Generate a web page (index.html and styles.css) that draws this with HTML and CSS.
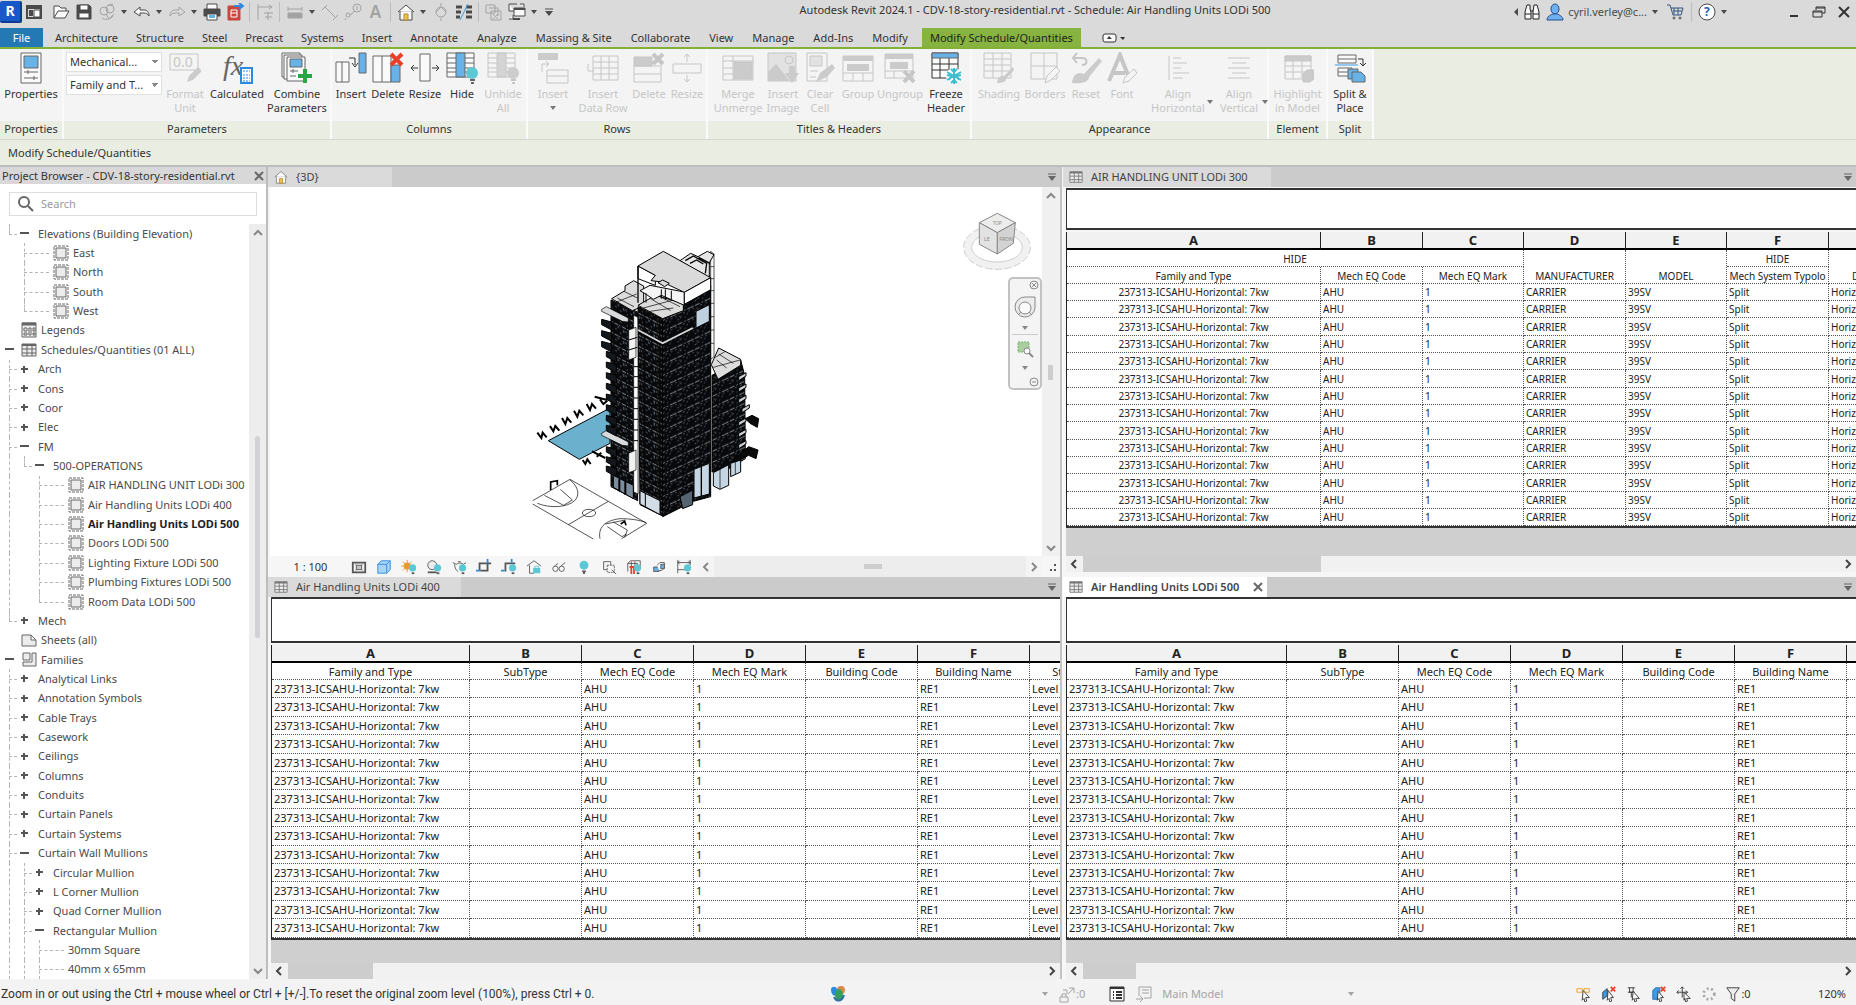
FILE: index.html
```html
<!DOCTYPE html>
<html lang="en">
<head>
	<meta charset="utf-8">
	<title>Autodesk Revit 2024.1</title>
	<link rel="stylesheet" href="styles.css">
</head>
<body>
	<!-- icons -->
	<svg class="sprite">
		<!-- quick access -->
		<symbol id="q-home-page" viewBox="0 0 18 18"><path d="M2 3h14v12H2zM2 5h14M4 8h4M4 10h4M4 12h4" stroke-width="2"/><path class="fw" d="M9 7h6v7H9z"/></symbol>
		<symbol id="q-open" viewBox="0 0 18 18"><path class="fw" d="M2 15V3h5l2 2h5v3"/><path class="fw" d="M2 15l4-7h11l-4 7z"/></symbol>
		<symbol id="q-save" viewBox="0 0 18 18"><path d="M2 2h12l2 2v12H2z" fill="currentColor"/><path class="fw" d="M5 2h8v5H5zM4 10h10v5H4z"/></symbol>
		<symbol id="q-sync" viewBox="0 0 18 18"><circle cx="6" cy="8" r="4"/><circle cx="12" cy="6" r="4"/><path d="M4 15c3 2 8 2 11-2M8 11l3 5 5-5M10 2l5-1"/></symbol>
		<symbol id="q-undo" viewBox="0 0 18 18"><path class="fw" d="M1 9l6-5v3h4c3 0 5 2 5 6-1-2-3-3-5-3H7v3z"/></symbol>
		<symbol id="q-redo" viewBox="0 0 18 18"><path d="M17 9l-6-5v3H7c-3 0-5 2-5 6 1-2 3-3 5-3h4v3z"/></symbol>
		<symbol id="q-print" viewBox="0 0 18 18"><path class="fw" d="M4 1h10v6H4z"/><path d="M1 6h16v7H1z" fill="currentColor"/><path class="fw" d="M4 11h10v6H4z"/><path class="fb" d="M6 12h6v3H6z" stroke="none"/></symbol>
		<symbol id="q-pdf" viewBox="0 0 18 18"><path d="M2 3h12v14H2z" fill="#c8473f" stroke="#c8473f"/><path d="M5 7h6v7H5zM5 10h6" stroke="#fff"/><path d="M8 3h8M13 0l4 3-4 3" stroke="#2b8ae0" stroke-width="2"/></symbol>
		<symbol id="q-align" viewBox="0 0 18 18"><path d="M2 1v16M2 4h13M13 2l3 2-3 2M12 9v8M8 10h9M9 14h7"/></symbol>
		<symbol id="q-measure" viewBox="0 0 18 18"><path d="M2 10h14v5H2z" fill="currentColor"/><path d="M2 6h14M2 4v4M16 4v4"/></symbol>
		<symbol id="q-line" viewBox="0 0 18 18"><path d="M4 4l10 10M1 7l5-5M12 17l5-5"/></symbol>
		<symbol id="q-tag" viewBox="0 0 18 18"><circle cx="13" cy="5" r="4"/><circle cx="4" cy="12" r="2"/><path d="M6 12l5-4M13 3v4M2 15l-1 2"/></symbol>
		<symbol id="q-house" viewBox="0 0 18 18"><path class="fw" d="M1 9l8-7 8 7M3 8v9h12V8"/><path class="door" d="M7 11h4v6H7z"/></symbol>
		<symbol id="q-section" viewBox="0 0 18 18"><circle cx="9" cy="9" r="5"/><path d="M9 0v3M9 15v3M4 9l5-5 5 5"/></symbol>
		<symbol id="q-thin" viewBox="0 0 18 18"><path d="M1 4h6M1 9h5M1 14h4M11 4h6M11 9h6M11 14h6" stroke-width="3"/><path d="M5 17l8-16" stroke="#3a9be8"/></symbol>
		<symbol id="q-hidden" viewBox="0 0 18 18"><path d="M1 2h9v8H1zM4 5h9v8M6 8h10v9H6zM8 11l5 5M13 11l-5 5"/></symbol>
		<symbol id="q-switch" viewBox="0 0 18 18"><path class="fw" d="M6 5h11v8H6zM1 1h8M1 1v7h5M12 1h4v3M5 12v4H1"/><path d="M6 6h11M5 16h7" stroke-width="2"/></symbol>

		<!-- ribbon, 32px -->
		<symbol id="r-props" viewBox="0 0 32 32"><path class="fw" d="M6 1h20v30H6z"/><path class="fb" d="M9 4h14v12H9z"/><path d="M9 20h14M9 26h14M13 18v4M19 24v4"/></symbol>
		<symbol id="r-format" viewBox="0 0 32 32"><path d="M1 2h28v16H1z"/><text x="4" y="15" font-size="14">0.0</text><path class="fg" d="M18 30l2-6 9-9 4 4-9 9z" stroke="none"/></symbol>
		<symbol id="r-calc" viewBox="0 0 32 32"><text class="fx" x="2" y="23">fx</text><path d="M20 16h11v15H20z" fill="#fff" stroke="#2b8ae0" stroke-width="2"/><path d="M22 19h7M22 23h7M22 26h7M22 29h7" stroke="#2b8ae0" stroke-dasharray="2 1"/></symbol>
		<symbol id="r-combine" viewBox="0 0 32 32"><path class="fw" d="M1 1h18v24H1z"/><path class="fw" d="M3 3h18v24H3z"/><path class="fw" d="M6 5h18v24H6z"/><path class="fb" d="M9 7h12v8H9z"/><path d="M9 19h8M9 24h6M12 17v4"/><path d="M24 17v14M17 24h14" stroke="#27a844" stroke-width="4"/></symbol>
		<symbol id="r-colins" viewBox="0 0 32 32"><path class="fw" d="M1 10h13v20H1zM7 10v20"/><path class="fb" d="M24 1h7v20h-7z"/><path d="M14 6h6v7M17 11l3 4 3-4" stroke="#333"/></symbol>
		<symbol id="r-coldel" viewBox="0 0 32 32"><path class="fw" d="M1 4h18v26H1zM10 4v26"/><path class="fb" d="M19 13h9v17h-9z"/><path d="M19 2l11 11M30 2L19 13" stroke="#e8412b" stroke-width="4"/></symbol>
		<symbol id="r-colres" viewBox="0 0 32 32"><path class="fw" d="M11 2h10v27H11z"/><path d="M9 16H2M5 13l-3 3 3 3M23 16h7M27 13l3 3-3 3" stroke="#333"/></symbol>
		<symbol id="r-hide" viewBox="0 0 32 32"><path class="fw" d="M1 1h27v24H1zM1 6h27M1 11h27M1 16h27M1 20h27"/><path class="fb" d="M10 1h9v24h-9z"/><circle class="fc" cx="26" cy="21" r="6" stroke="none"/><path d="M24 28h5M25 31h3" stroke-width="2"/></symbol>
		<symbol id="r-rowins" viewBox="0 0 32 32"><path class="fg" d="M1 1h20v7H1z" stroke="none"/><path d="M10 18h21v13H10zM10 24h21M5 20v-8h6M9 9l3 3-3 3"/></symbol>
		<symbol id="r-rowdata" viewBox="0 0 32 32"><path d="M6 4h25v24H6zM6 10h25M6 16h25M6 22h25M14 4v24M22 4v24M1 12v7h6"/></symbol>
		<symbol id="r-rowdel" viewBox="0 0 32 32"><path class="fg" d="M1 5h18v9H1z"/><path d="M1 14h27v16H1zM1 22h27"/><path d="M20 2l10 10M30 2L20 12" stroke-width="4"/></symbol>
		<symbol id="r-rowres" viewBox="0 0 32 32"><path d="M2 12h28v9H2zM16 10V2M13 5l3-3 3 3M16 23v7M13 27l3 3 3-3"/></symbol>
		<symbol id="r-merge" viewBox="0 0 32 32"><path d="M1 4h30v24H1zM1 9h30M1 16h10M1 22h10M11 4v24"/><path class="fg" d="M12 10h18v17H12z"/></symbol>
		<symbol id="r-image" viewBox="0 0 32 32"><path class="fl" d="M1 1h28v28H1z"/><path class="fg" d="M1 29V20l8-8 14 17zM22 14h6v7h4l-7 10-7-10h4z" stroke="none"/><circle cx="22" cy="8" r="4"/></symbol>
		<symbol id="r-clear" viewBox="0 0 32 32"><path d="M3 1h20v28H3z"/><path class="fl" d="M6 4h12v10H6z"/><path d="M6 19h8M6 25h6"/><path class="fg" d="M12 30l4-9 12-9 3 4-8 9z" stroke="none"/></symbol>
		<symbol id="r-group" viewBox="0 0 32 32"><path d="M1 4h30v25H1zM1 21h30M11 21v8M21 21v8"/><path class="fg" d="M1 4h30v5H1zM5 12h22v7H5z" stroke="none"/></symbol>
		<symbol id="r-ungroup" viewBox="0 0 32 32"><path d="M1 2h28v24H1zM1 19h28M10 19v7"/><path class="fg" d="M1 2h28v5H1zM6 10h18v7H6z" stroke="none"/><path d="M20 19l10 11M30 19L20 30" stroke-width="4"/></symbol>
		<symbol id="r-freeze" viewBox="0 0 32 32"><path class="fw" d="M2 1h26v25H2zM2 12h26M2 18h26M10 6v20M19 6v20" stroke="#333"/><path class="fb" d="M2 1h26v5H2z"/><circle cx="24" cy="24" r="8" fill="#fff" stroke="none"/><path d="M24 16v16M17 20l14 8M17 28l14-8M21 17l3 3 3-3M21 31l3-3 3 3M17 23l4 1-2 4M31 23l-4 1 2 4" stroke="#3dbdd0" stroke-width="2"/></symbol>
		<symbol id="r-shade" viewBox="0 0 32 32"><path d="M1 1h27v25H1zM1 7h27M1 13h27M1 19h27M10 1v25M19 1v25"/><path class="fg" d="M14 31c1-6 4-8 7-7l9-9 1 3-8 9c0 3-4 4-9 4z" stroke="none"/></symbol>
		<symbol id="r-border" viewBox="0 0 32 32"><path d="M2 1h26v26H2zM15 1v26M2 14h26"/><path class="fw" d="M16 31l2-7 9-9 4 4-9 9z"/></symbol>
		<symbol id="r-reset" viewBox="0 0 32 32"><path d="M3 6h9c6 0 6 7 0 7M7 1L3 6l4 5" stroke-width="2"/><path class="fg" d="M2 31c1-9 6-12 12-9L29 6l3 3-13 16c0 5-7 7-17 6z" stroke="none"/></symbol>
		<symbol id="r-font" viewBox="0 0 32 32"><path d="M3 29L14 3l8 20M7 21h12" stroke-width="4"/><path class="fw" d="M17 31l2-6 9-8 3 4-8 8z"/></symbol>
		<symbol id="r-alignh" viewBox="0 0 32 32"><path d="M7 4v24M11 6h8M11 11h14M11 16h8M11 21h16M11 26h10"/></symbol>
		<symbol id="r-alignv" viewBox="0 0 32 32"><path d="M5 6h22M9 11h14M5 16h22M9 21h14M5 26h22"/></symbol>
		<symbol id="r-high" viewBox="0 0 32 32"><path d="M3 4h26v23H3zM3 14h26M3 20h26M11 9v18M20 9v18"/><path class="fg" d="M3 4h26v5H3zM21 22l4-4h7v9l-4 3h-7z"/></symbol>
		<symbol id="r-split" viewBox="0 0 32 32"><path class="fw" d="M4 3h18v8H4zM4 7h18M4 16h14v8H4zM4 20h10"/><path d="M1 13h23" stroke="#3a9be8"/><path d="M24 7h5v6M26 11l3 3 3-3" stroke="#333"/><path class="fb" d="M14 17h10v10H14z"/><path class="fb" d="M18 20h9l4 4v6H18z"/></symbol>

		<!-- tree and panes -->
		<symbol id="t-view" viewBox="0 0 16 16"><path d="M1 1h14v14H1z" stroke-dasharray="3 1"/><path class="fl" d="M3 3h10v10H3z"/></symbol>
		<symbol id="t-legend" viewBox="0 0 16 16"><path class="fl" d="M1 1h14v14H1z"/><path d="M1 2h14" stroke-width="3"/><path d="M3 6h3v3H3zM3 11h3v2H3zM8 6h2v7H8zM12 6h2v3h-2zM12 11h2v2h-2z"/></symbol>
		<symbol id="t-sched" viewBox="0 0 16 16"><path class="fl" d="M1 2h14v12H1z"/><path d="M1 3h14" stroke-width="2"/><path d="M1 7h14M1 11h14M6 2v12M11 2v12"/></symbol>
		<symbol id="t-sheet" viewBox="0 0 16 16"><path class="fl" d="M1 3h9l5 5v6H1zM10 3v5h5"/></symbol>
		<symbol id="t-family" viewBox="0 0 16 16"><path class="fl" d="M2 1h7v7H2zM11 1h4v13H2v-4h9z"/></symbol>
		<symbol id="plus" viewBox="0 0 9 9"><path d="M4 1v7M1 4h7" stroke-width="2"/></symbol>
		<symbol id="minus" viewBox="0 0 9 9"><path d="M0 4h9" stroke-width="2"/></symbol>
		<symbol id="up" viewBox="0 0 10 10"><path d="M1 7l4-4 4 4" stroke-width="2"/></symbol>
		<symbol id="down" viewBox="0 0 10 10"><path d="M1 3l4 4 4-4" stroke-width="2"/></symbol>
		<symbol id="left" viewBox="0 0 10 10"><path d="M7 1L3 5l4 4" stroke-width="2"/></symbol>
		<symbol id="right" viewBox="0 0 10 10"><path d="M3 1l4 4-4 4" stroke-width="2"/></symbol>
		<symbol id="x" viewBox="0 0 10 10"><path d="M1 1l8 8M9 1L1 9" stroke-width="2"/></symbol>
		<symbol id="caret" viewBox="0 0 8 8"><path d="M1 2h6L4 6z" fill="currentColor" stroke="none"/></symbol>
		<symbol id="menu" viewBox="0 0 10 10"><path d="M1 2h8"/><path d="M1 4h8L5 9z" fill="currentColor" stroke="none"/></symbol>

		<!-- view control bar -->
		<symbol id="v-size" viewBox="0 0 18 18"><path d="M2 4h14v11H2z" stroke-width="2"/><path d="M5 6l8 7M13 6l-8 7"/><path class="fg" d="M6 7h6v5H6z"/></symbol>
		<symbol id="v-cube" viewBox="0 0 18 18"><path d="M2 6l4-4h10v10l-4 4H2zM2 6h10v10M12 6l4-4" fill="#a9d4f7" stroke="#2b8ae0"/></symbol>
		<symbol id="v-sun" viewBox="0 0 18 18"><circle cx="7" cy="8" r="4" fill="#eb9a2c" stroke="none"/><path d="M7 1v14M0 8h14M2 3l10 10M12 3L2 13" stroke="#eb9a2c"/><use href="#v-bulb"/></symbol>
		<symbol id="v-shadow" viewBox="0 0 18 18"><circle class="fl" cx="7" cy="7" r="5"/><path d="M2 15h10" stroke-width="2"/><use href="#v-bulb"/></symbol>
		<symbol id="v-render" viewBox="0 0 18 18"><path d="M2 4l4 2c2-2 6-2 8 0l3-2M4 6c0 4 2 7 4 8M8 3h3"/><use href="#v-bulb"/></symbol>
		<symbol id="v-crop" viewBox="0 0 18 18"><path d="M4 13V5h13M5 13h8V4" stroke-width="2"/><path d="M0 13h5M13 0v5" stroke="#2b8ae0" stroke-width="2"/></symbol>
		<symbol id="v-cropb" viewBox="0 0 18 18"><path d="M5 14V5h11" stroke-width="2"/><path d="M0 13h4M12 0v4" stroke="#2b8ae0" stroke-width="2"/><use href="#v-bulb"/></symbol>
		<symbol id="v-lock" viewBox="0 0 18 18"><path class="fw" d="M1 8l8-6 8 6M4 7v9h5"/><path class="fc" d="M8 10h8v6H8z" stroke="none"/><path d="M10 10V8h4v2" stroke="#5cc8d6"/></symbol>
		<symbol id="v-glass" viewBox="0 0 18 18"><circle cx="5" cy="11" r="3"/><circle cx="12" cy="11" r="3"/><path d="M4 8l4-3M11 8l5-4"/></symbol>
		<symbol id="v-bulb" viewBox="0 0 18 18"><circle class="fc" cx="13" cy="10" r="4" stroke="none"/><path d="M12 16h3" stroke-width="2"/></symbol>
		<symbol id="v-reveal" viewBox="0 0 18 18"><circle class="fc" cx="9" cy="7" r="5" stroke="none"/><path d="M7 14h4M8 16h2" stroke-width="2"/></symbol>
		<symbol id="v-temp" viewBox="0 0 18 18"><path d="M3 3h8v4M3 3v9h4"/><path d="M7 7h8v8H7z" stroke-dasharray="2 1"/><path d="M12 12l5 5"/></symbol>
		<symbol id="v-anal" viewBox="0 0 18 18"><path d="M2 5l3-3h11v9M2 5v9M2 5h11v9M6 3v9M10 3v9"/><path d="M6 9v8M9 9v8M4 9h8" stroke="#e8412b" stroke-width="2"/><use href="#v-bulb"/></symbol>
		<symbol id="v-disp" viewBox="0 0 18 18"><path class="fb" d="M3 9h6v5H3z"/><path class="fw" d="M7 7l3-3h5v6l-3 3H9"/><path class="fb" d="M11 6h4v5h-4z"/></symbol>
		<symbol id="v-con" viewBox="0 0 18 18"><path d="M2 1v15M16 1v6M2 4h14M2 12h10M4 2L2 4l2 2M14 2l2 2-2 2"/><use href="#v-bulb"/></symbol>
	</svg>

	<header class="titlebar">
		<div class="quick">
			<button class="logo">R</button>
			<button class="q gap-r"><svg><use href="#q-home-page"/></svg></button>
			<button class="q"><svg><use href="#q-open"/></svg></button>
			<button class="q"><svg><use href="#q-save"/></svg></button>
			<button class="q off"><svg><use href="#q-sync"/></svg></button>
			<button class="c"><svg><use href="#caret"/></svg></button>
			<button class="q"><svg><use href="#q-undo"/></svg></button>
			<button class="c"><svg><use href="#caret"/></svg></button>
			<button class="q off"><svg><use href="#q-redo"/></svg></button>
			<button class="c"><svg><use href="#caret"/></svg></button>
			<button class="q"><svg><use href="#q-print"/></svg></button>
			<button class="q"><svg><use href="#q-pdf"/></svg></button>
			<i class="sep"></i>
			<button class="q off"><svg><use href="#q-align"/></svg></button>
			<i class="sep"></i>
			<button class="q off"><svg><use href="#q-measure"/></svg></button>
			<button class="c"><svg><use href="#caret"/></svg></button>
			<button class="q off"><svg><use href="#q-line"/></svg></button>
			<button class="q off"><svg><use href="#q-tag"/></svg></button>
			<button class="q off big-a">A</button>
			<i class="sep"></i>
			<button class="q"><svg><use href="#q-house"/></svg></button>
			<button class="c"><svg><use href="#caret"/></svg></button>
			<button class="q off"><svg><use href="#q-section"/></svg></button>
			<button class="q"><svg><use href="#q-thin"/></svg></button>
			<i class="sep"></i>
			<button class="q off"><svg><use href="#q-hidden"/></svg></button>
			<button class="q"><svg><use href="#q-switch"/></svg></button>
			<button class="c"><svg><use href="#caret"/></svg></button>
			<button class="c menu"><svg><use href="#menu"/></svg></button>
		</div>
		<h1>Autodesk Revit 2024.1 - CDV-18-story-residential.rvt - Schedule: Air Handling Units LODi 500</h1>
		<div class="account">
			<svg class="s8" viewBox="0 0 8 8"><path d="M6 0v8L2 4z" fill="currentColor" stroke="none"/></svg>
			<button class="q"><svg viewBox="0 0 18 18"><path class="fw" d="M4 2h3v4l1 3v7H2V9zM11 2h3l2 7v7h-6V9zM8 8h2M2 11h6M10 11h6" stroke="#222"/></svg></button>
			<button class="q"><svg viewBox="0 0 18 18"><ellipse cx="9" cy="6" rx="4" ry="5" fill="#6fb0f0" stroke="#24508a"/><path d="M1 17c0-4 3-4 5-6h6c2 2 5 2 5 6z" fill="#6fb0f0" stroke="#24508a"/></svg></button>
			<a href="#" class="user">cyril.verley@c...</a>
			<button class="c"><svg><use href="#caret"/></svg></button>
			<button class="q cart"><svg viewBox="0 0 18 18"><path d="M1 2h3l3 10h8l2-7H5M7 8h9M8 5v7M12 5v7" stroke="#33557e"/><circle cx="8" cy="15" r="1"/><circle cx="14" cy="15" r="1"/></svg></button>
			<i class="sep"></i>
			<button class="q"><svg viewBox="0 0 18 18"><circle cx="9" cy="9" r="8" fill="#fff"/><text class="help" x="6" y="13">?</text></svg></button>
			<button class="c"><svg><use href="#caret"/></svg></button>
		</div>
		<div class="winbtns">
			<button><svg viewBox="0 0 14 14"><path d="M3 11h8" stroke-width="2"/></svg></button>
			<button><svg viewBox="0 0 14 14"><path d="M4 5V2h9v6h-3M4 3h9M1 6h9v6H1zM1 7h9"/></svg></button>
			<button><svg viewBox="0 0 14 14"><path d="M2 2l10 10M12 2L2 12" stroke-width="2"/></svg></button>
		</div>
	</header>

	<nav class="tabs">
		<a class="file" href="#">File</a>
		<a href="#">Architecture</a>
		<a href="#">Structure</a>
		<a href="#">Steel</a>
		<a href="#">Precast</a>
		<a href="#">Systems</a>
		<a href="#">Insert</a>
		<a href="#">Annotate</a>
		<a href="#">Analyze</a>
		<a href="#">Massing &amp; Site</a>
		<a href="#">Collaborate</a>
		<a href="#">View</a>
		<a href="#">Manage</a>
		<a href="#">Add-Ins</a>
		<a href="#">Modify</a>
		<a class="current" href="#">Modify Schedule/Quantities</a>
		<button class="collapse"><svg viewBox="0 0 24 10"><rect class="fw" x="1" y="1" width="13" height="8" rx="2"/><path d="M5 6h5L7 3zM18 4h5l-2 3z" fill="currentColor" stroke="none"/></svg></button>
	</nav>

	<div class="ribbon">
		<section class="p-props">
			<div class="tools"><button class="w58"><svg><use href="#r-props"/></svg>Properties</button></div>
			<h2>Properties</h2>
		</section>
		<section class="p-params">
			<div class="tools">
				<div class="selects">
					<select aria-label="Category"><option>Mechanical...</option></select>
					<select aria-label="Parameter"><option>Family and T...</option></select>
				</div>
				<button class="w46" disabled><svg><use href="#r-format"/></svg>Format<br>Unit</button>
				<button class="w58"><svg><use href="#r-calc"/></svg>Calculated</button>
				<button class="w62"><svg><use href="#r-combine"/></svg>Combine<br>Parameters</button>
			</div>
			<h2>Parameters</h2>
		</section>
		<section class="p-cols">
			<div class="tools">
				<button class="w38"><svg><use href="#r-colins"/></svg>Insert</button>
				<button class="w36"><svg><use href="#r-coldel"/></svg>Delete</button>
				<button class="w38"><svg><use href="#r-colres"/></svg>Resize</button>
				<button class="w36"><svg><use href="#r-hide"/></svg>Hide</button>
				<button class="w46" disabled><svg><use href="#r-hide"/></svg>Unhide<br>All</button>
			</div>
			<h2>Columns</h2>
		</section>
		<section class="p-rows">
			<div class="tools">
				<button class="w46" disabled><svg><use href="#r-rowins"/></svg>Insert<svg class="s8 dark"><use href="#caret"/></svg></button>
				<button class="w54" disabled><svg><use href="#r-rowdata"/></svg>Insert<br>Data Row</button>
				<button class="w38" disabled><svg><use href="#r-rowdel"/></svg>Delete</button>
				<button class="w38" disabled><svg><use href="#r-rowres"/></svg>Resize</button>
			</div>
			<h2>Rows</h2>
		</section>
		<section class="p-titles">
			<div class="tools">
				<button class="w54" disabled><svg><use href="#r-merge"/></svg>Merge<br>Unmerge</button>
				<button class="w36" disabled><svg><use href="#r-image"/></svg>Insert<br>Image</button>
				<button class="w38" disabled><svg><use href="#r-clear"/></svg>Clear<br>Cell</button>
				<button class="w38" disabled><svg><use href="#r-group"/></svg>Group</button>
				<button class="w46" disabled><svg><use href="#r-ungroup"/></svg>Ungroup</button>
				<button class="w46"><svg><use href="#r-freeze"/></svg>Freeze<br>Header</button>
			</div>
			<h2>Titles &amp; Headers</h2>
		</section>
		<section class="p-look">
			<div class="tools">
				<button class="w46" disabled><svg><use href="#r-shade"/></svg>Shading</button>
				<button class="w46" disabled><svg><use href="#r-border"/></svg>Borders</button>
				<button class="w36" disabled><svg><use href="#r-reset"/></svg>Reset</button>
				<button class="w36" disabled><svg><use href="#r-font"/></svg>Font</button>
				<button class="w58 drop" disabled><svg><use href="#r-alignh"/></svg>Align<br>Horizontal<svg class="s8 dark"><use href="#caret"/></svg></button>
				<button class="w46 drop" disabled><svg><use href="#r-alignv"/></svg>Align<br>Vertical<svg class="s8 dark"><use href="#caret"/></svg></button>
			</div>
			<h2>Appearance</h2>
		</section>
		<section class="p-elem">
			<div class="tools"><button class="w54" disabled><svg><use href="#r-high"/></svg>Highlight<br>in Model</button></div>
			<h2>Element</h2>
		</section>
		<section class="p-split">
			<div class="tools"><button class="w38"><svg><use href="#r-split"/></svg>Split &amp;<br>Place</button></div>
			<h2>Split</h2>
		</section>
	</div>
	<div class="options">Modify Schedule/Quantities</div>

	<main class="work">
		<aside class="browser">
			<div class="browser-title">Project Browser - CDV-18-story-residential.rvt
				<button><svg class="s10"><use href="#x"/></svg></button>
			</div>
			<label class="search">
				<svg viewBox="0 0 18 18"><circle cx="7" cy="7" r="5" stroke-width="2"/><path d="M11 11l5 5" stroke-width="2"/></svg>
				<input type="text" placeholder="Search">
			</label>
			<div class="browser-body">
				<ul class="tree" id="tree"></ul>
				<div class="vbar">
					<button><svg class="s10"><use href="#up"/></svg></button>
					<div class="track"><i class="thumb"></i></div>
					<button><svg class="s10"><use href="#down"/></svg></button>
				</div>
			</div>
		</aside>

		<div class="views">
			<section class="pane view3d">
				<div class="pane-tabs">
					<div class="tab tab-3d"><svg><use href="#q-house"/></svg>{3D}</div>
					<button class="list"><svg class="s10"><use href="#menu"/></svg></button>
				</div>
				<div class="scene">
					<div class="canvas">
						<svg class="model" viewBox="0 0 900 960">
							<defs>
								<pattern id="floorL" width="46" height="33" patternUnits="userSpaceOnUse" patternTransform="skewY(27)">
									<path d="M0 0h46v33H0z" fill="#08090c" stroke="none"/>
									<path d="M0 5h46" stroke="#c4c9cc" stroke-width="2" stroke-dasharray="10 3 4 5"/>
									<path d="M3 12v9M33 9v6" stroke="#66788a" stroke-width="3"/>
									<path d="M8 15h5M24 20h4M38 26h4M12 27h3" stroke="#a39d92" stroke-width="2"/>
								</pattern>
								<pattern id="floorR" width="52" height="33" patternUnits="userSpaceOnUse" patternTransform="skewY(-25)">
									<path d="M0 0h52v33H0z" fill="#08090c" stroke="none"/>
									<path d="M0 4h52" stroke="#c4c9cc" stroke-width="2" stroke-dasharray="9 4 14 6 4 5"/>
									<path d="M6 11h4M17 15h3M29 11h5M40 18h4M12 23h5M34 26h3" stroke="#77889a" stroke-width="2"/>
									<path d="M23 17v5M47 9v4" stroke="#b3a896" stroke-width="2"/>
								</pattern>
							</defs>
							<g stroke="#000" stroke-width="3">
								<!-- pool and loungers -->
								<path d="M145 632l185-98v106l-92 48z" fill="#6bb0cc"/>
								<path d="M112 608l12 16 4-16 12 14M150 588l10 16 6-16 12 14M186 564l10 18 6-18 12 14M222 542l10 18 6-18 12 14M260 522l10 18 6-18 12 14M284 500l38 10M300 508l10 14 12-10M248 690l8 12 6-14 10 14M276 664l40 20M290 680l14-12" stroke-width="6"/>
								<!-- basketball court -->
								<path d="M98 812l112-64 230 132-75 46M98 822l182 105M325 814l-120 70" stroke-width="2"/>
								<ellipse cx="267" cy="849" rx="20" ry="11" stroke-width="2"/>
								<path d="M112 820c40 16 90 12 112-8 16-16 12-42-14-62M133 796l58 30 26-16-36-32M300 926c-6-30 10-54 60-60 30 0 60 4 78 12M322 890l44 30 14-8M340 876l42 24-8 22M316 882l60-12" stroke-width="2"/>
								<path d="M152 780v-24l20-4v14M362 882l12-8 4 12" stroke-width="5"/>
								<!-- rear core -->
								<path d="M632 96V64l10 8v308l-10 8z" fill="#fff" stroke-width="2"/>
								<path d="M540 92l32-22 22 10 28-16 20 10-14 24v50z" fill="#e6e6e6"/>
								<path d="M556 92l24-14 40 22-4 30M570 100l20-10 20 12M596 82l34 18" stroke-width="4"/>
								<path d="M632 110h10M632 146h10M632 182h10M632 220h10M632 260h10M632 300h10M632 340h10" stroke-width="2"/>
								<!-- right wing -->
								<path d="M636 436l86-46 12 46 2 250-50 30-50 10z" fill="url(#floorR)"/>
								<path d="M634 404l22-50 66 34v18l-68 42z" fill="#dcdcdc"/>
								<path d="M640 412l80-22M656 372l44 28M650 390l30 24M676 364l-30 18" stroke-width="2"/>
								<path id="slabR" d="M716 440l22-12v10l-22 14z" fill="#c9cdd0"/>
								<use href="#slabR" y="34"/><use href="#slabR" y="68"/><use href="#slabR" x="10" y="96"/><use href="#slabR" y="136"/><use href="#slabR" y="170"/><use href="#slabR" y="204"/><use href="#slabR" y="236"/>
								<path d="M736 566l20-10 20 10-4 26-22-12zM700 690l46-40 28 10-6 26-22-10-40 20z" fill="#0a0a0a"/>
								<path d="M640 728l46-24v62l-26 12-20-10zM692 700l30-10v36l-30 14z" fill="#c5d5e3"/>
								<path d="M660 716v60M706 696v36" stroke-width="2"/>
								<!-- left wing -->
								<path d="M333 210l80 36v566l-80-42z" fill="url(#floorL)"/>
								<path id="slabL" d="M305 238l14-8 66 34v12l-18-2-62-30z" fill="#d8dadc" stroke-width="2"/>
								<use href="#slabL" y="372"/>
								<path id="stub" d="M305 268l30 8v24l-30-16z" fill="#14181d"/>
								<use href="#stub" y="34"/><use href="#stub" y="66"/><use href="#stub" x="14" y="96"/><use href="#stub" x="14" y="128"/><use href="#stub" x="14" y="160"/><use href="#stub" x="14" y="192"/><use href="#stub" x="14" y="224"/><use href="#stub" x="14" y="256"/><use href="#stub" x="14" y="288"/><use href="#stub" x="14" y="318"/><use href="#stub" x="14" y="382"/><use href="#stub" x="14" y="412"/><use href="#stub" x="14" y="440"/>
								<path d="M335 206l40-24v-14l26-16 30 16v60l-34 14z" fill="#dcdcdc"/>
								<path d="M352 204l50 26M372 184l40 20M350 216l60-24" stroke-width="2"/>
								<path d="M401 256l13 6v530l-13-6z" fill="#fff" stroke-width="2"/>
								<path d="M386 300l22-8v90l-22 8zM386 670l22-10v60l-22 8z" fill="#f2f2f2" stroke-width="2"/>
								<path d="M386 330l26-8M386 360l26-8M401 410h13M401 440h13M401 472h13M401 504h13M401 536h13M401 568h13M401 600h13M401 632h13" stroke-width="3"/>
								<path d="M340 736l60 30v40l-60-34z" fill="#7b8c9c"/>
								<path d="M358 746v38M376 754v40" stroke-width="6"/>
								<!-- main tower -->
								<path d="M414 230l74 36v592l-68-34z" fill="url(#floorL)"/>
								<path d="M488 266l144-100v634l-52 14-92 46z" fill="url(#floorR)"/>
								<path d="M414 300l74 40 90-46" stroke="#d8d8d8" stroke-width="5"/>
								<path d="M414 306l74 40 144-72" stroke-width="2"/>
								<path d="M588 244l40-20v50l-40 20z" fill="#bfd0de"/>
								<path d="M414 226l52-30 84 24v22l-62 24z" fill="#dcdcdc"/>
								<path d="M430 234l90-24M450 244l70-10M452 206l60 36M480 200l60 30" stroke-width="2"/>
								<path d="M420 182l30-16 103 20v40l-69-30-24 12-20-14z" fill="#f4f4f4"/>
								<path d="M438 190v28M484 178v28M496 178v32M514 182v26" stroke-width="3"/>
								<path d="M414 108l52 28v30l-52-20z" fill="#fff"/>
								<path d="M414 108l76-44 142 79-79 44-66-31-34-4 13-16z" fill="#dadada"/>
								<path d="M553 187l79-44v36l-79 44z" fill="#fff"/>
								<path d="M474 158l14-8 20 10-14 10z" fill="#dadada"/>
								<path d="M414 108v110" stroke-width="4"/>
								<path d="M420 782l60 30v42l-60-32z" fill="#d2dce6"/>
								<path d="M436 790v40M540 800l38-20v44l-30 12z" fill="#55646f"/>
								<path d="M582 718l46-18v92l-46 12z" fill="#c5d5e3"/>
								<path d="M604 710v88" stroke-width="4"/>
							</g>
						</svg>
						<svg class="cube" viewBox="0 0 210 180">
							<g stroke="#cfcfcf" stroke-width="3">
								<ellipse cx="105" cy="112" rx="88" ry="55" stroke="#f1f1f1" stroke-width="22"/>
								<ellipse cx="105" cy="112" rx="100" ry="66" stroke-dasharray="22 7"/>
								<ellipse cx="105" cy="112" rx="76" ry="44"/>
								<path d="M52 38l54-28 54 28-54 30z" fill="#ececec" stroke="#888"/>
								<path d="M52 38l54 30v64l-54-29z" fill="#e2e2e2" stroke="#888"/>
								<path d="M106 68l54-30-6 62-48 32z" fill="#d3d3d3" stroke="#888"/>
							</g>
							<text x="92" y="44" font-size="14">TOP</text>
							<text x="66" y="92" font-size="16">LE</text>
							<text x="112" y="92" font-size="15">FRON</text>
						</svg>
						<div class="navbar">
							<button><svg class="s10" viewBox="0 0 10 10"><circle cx="5" cy="5" r="4"/><path d="M3 3l4 4M7 3L3 7"/></svg></button>
							<button class="wheel"><svg viewBox="0 0 24 24"><path class="fl" d="M12 1h10v11A10 10 0 1 1 12 1z"/><circle class="fw" cx="12" cy="12" r="6"/><path d="M5 19l3-3M19 19l-3-3"/></svg></button>
							<button><svg class="s8"><use href="#caret"/></svg></button>
							<hr>
							<button class="zoomer"><svg viewBox="0 0 18 18"><path d="M2 2h11v10H2z" fill="#a9cf9f" stroke="#7fb072" stroke-dasharray="2 1"/><circle class="fw" cx="11" cy="11" r="3"/><path d="M13 13l4 4" stroke-width="2"/></svg></button>
							<button><svg class="s8"><use href="#caret"/></svg></button>
							<button class="last"><svg class="s10" viewBox="0 0 10 10"><circle cx="5" cy="5" r="4"/><path d="M3 5h4"/></svg></button>
						</div>
					</div>
					<div class="vbar wide">
						<button><svg class="s10"><use href="#up"/></svg></button>
						<div class="track"><i class="thumb"></i></div>
						<button><svg class="s10"><use href="#down"/></svg></button>
					</div>
				</div>
				<div class="viewctl">
					<button class="scale">1 : 100</button>
					<button class="vc"><svg><use href="#v-size"/></svg></button>
					<button class="vc"><svg><use href="#v-cube"/></svg></button>
					<button class="vc"><svg><use href="#v-sun"/></svg></button>
					<button class="vc"><svg><use href="#v-shadow"/></svg></button>
					<button class="vc"><svg><use href="#v-render"/></svg></button>
					<button class="vc"><svg><use href="#v-crop"/></svg></button>
					<button class="vc"><svg><use href="#v-cropb"/></svg></button>
					<button class="vc"><svg><use href="#v-lock"/></svg></button>
					<button class="vc"><svg><use href="#v-glass"/></svg></button>
					<button class="vc"><svg><use href="#v-reveal"/></svg></button>
					<button class="vc"><svg><use href="#v-temp"/></svg></button>
					<button class="vc"><svg><use href="#v-anal"/></svg></button>
					<button class="vc"><svg><use href="#v-disp"/></svg></button>
					<button class="vc"><svg><use href="#v-con"/></svg></button>
					<div class="mini">
						<button><svg class="s10"><use href="#left"/></svg></button>
						<div class="track"><i class="thumb"></i></div>
						<button><svg class="s10"><use href="#right"/></svg></button>
					</div>
					<svg class="grip" viewBox="0 0 10 10"><path d="M8 2v2M8 7v2M4 7v2" stroke-width="2"/></svg>
				</div>
			</section>

			<section class="pane small">
				<div class="pane-tabs">
					<div class="tab tab-300"><svg><use href="#t-sched"/></svg>AIR HANDLING UNIT LODi 300</div>
					<button class="list"><svg class="s10"><use href="#menu"/></svg></button>
				</div>
				<div class="heading"></div>
				<div class="sheet">
					<table class="schedule">
						<colgroup><col class="c254"><col class="c102"><col class="c101"><col class="c102"><col class="c101"><col class="c102"><col class="c101"></colgroup>
						<thead>
							<tr class="letters"><th>A</th><th>B</th><th>C</th><th>D</th><th>E</th><th>F</th><th></th></tr>
							<tr><th colspan="3">HIDE</th><th rowspan="2">MANUFACTURER</th><th rowspan="2">MODEL</th><th>HIDE</th><th rowspan="2">Description</th></tr>
							<tr><th>Family and Type</th><th>Mech EQ Code</th><th>Mech EQ Mark</th><th class="clip">Mech System Typolo</th></tr>
						</thead>
						<tbody data-row="237313-ICSAHU-Horizontal: 7kw|AHU|1|CARRIER|39SV|Split|Horizontal"></tbody>
					</table>
				</div>
				<div class="hbar t238">
					<button><svg class="s10"><use href="#left"/></svg></button>
					<div class="track"><i class="thumb"></i></div>
					<button><svg class="s10"><use href="#right"/></svg></button>
				</div>
			</section>

			<section class="pane">
				<div class="pane-tabs">
					<div class="tab tab-400"><svg><use href="#t-sched"/></svg>Air Handling Units LODi 400</div>
					<button class="list"><svg class="s10"><use href="#menu"/></svg></button>
				</div>
				<div class="heading"></div>
				<div class="sheet">
					<table class="schedule">
						<colgroup><col class="c198"><col class="c112"><col class="c112"><col class="c112"><col class="c112"><col class="c112"><col class="c112"></colgroup>
						<thead>
							<tr class="letters"><th>A</th><th>B</th><th>C</th><th>D</th><th>E</th><th>F</th><th></th></tr>
							<tr><th>Family and Type</th><th>SubType</th><th>Mech EQ Code</th><th>Mech EQ Mark</th><th>Building Code</th><th>Building Name</th><th>Storey Name</th></tr>
						</thead>
						<tbody data-row="237313-ICSAHU-Horizontal: 7kw||AHU|1||RE1|Level 1"></tbody>
					</table>
				</div>
				<div class="hbar t85">
					<button><svg class="s10"><use href="#left"/></svg></button>
					<div class="track"><i class="thumb"></i></div>
					<button><svg class="s10"><use href="#right"/></svg></button>
				</div>
			</section>

			<section class="pane">
				<div class="pane-tabs">
					<div class="tab tab-500"><svg><use href="#t-sched"/></svg>Air Handling Units LODi 500 <button><svg class="s10"><use href="#x"/></svg></button></div>
					<button class="list"><svg class="s10"><use href="#menu"/></svg></button>
				</div>
				<div class="heading"></div>
				<div class="sheet">
					<table class="schedule">
						<colgroup><col class="c220"><col class="c112"><col class="c112"><col class="c112"><col class="c112"><col class="c112"><col class="c112"></colgroup>
						<thead>
							<tr class="letters"><th>A</th><th>B</th><th>C</th><th>D</th><th>E</th><th>F</th><th></th></tr>
							<tr><th>Family and Type</th><th>SubType</th><th>Mech EQ Code</th><th>Mech EQ Mark</th><th>Building Code</th><th>Building Name</th><th></th></tr>
						</thead>
						<tbody data-row="237313-ICSAHU-Horizontal: 7kw||AHU|1||RE1|"></tbody>
					</table>
				</div>
				<div class="hbar t53">
					<button><svg class="s10"><use href="#left"/></svg></button>
					<div class="track"><i class="thumb"></i></div>
					<button><svg class="s10"><use href="#right"/></svg></button>
				</div>
			</section>
		</div>
	</main>

	<footer class="status">
		<p>Zoom in or out using the Ctrl + mouse wheel or Ctrl + [+/-].To reset the original zoom level (100%), press Ctrl + 0.</p>
		<svg class="s18 globe" viewBox="0 0 18 18"><path d="M2 4c1-3 5-3 6 0v5c-3 4-6 0-6-5z" fill="#2b8ae0" stroke="none"/><circle cx="12" cy="5" r="4" fill="#d98a4a" stroke="none"/><ellipse cx="10" cy="10" rx="4" ry="6" fill="#34a05a" stroke="none"/><path d="M5 12c2 5 8 5 10-2" stroke="#2b6fb0" stroke-width="2"/></svg>
		<div class="model-state">
			<svg class="s8 faint"><use href="#caret"/></svg>
			<span class="faint ic"><svg class="s18" viewBox="0 0 18 18"><path d="M2 12h8v5H2zM4 12V9h4v3M10 9l6-6M11 3h5v5M5 5h4v4"/></svg>:0</span>
			<svg class="s18" viewBox="0 0 18 18"><path class="fw" d="M2 2h14v14H2z"/><path d="M2 3h14" stroke-width="2"/><path d="M5 7h1M8 7h6M5 10h1M8 10h6M5 13h1M8 13h6" stroke-width="2"/></svg>
			<svg class="s18 faint" viewBox="0 0 18 18"><path d="M4 2h12v11H9M4 2v9M7 5h7M7 8h7M1 14h7M5 11l3 3-3 3"/></svg>
			<button class="faint main-model">Main Model <svg class="s8"><use href="#caret"/></svg></button>
		</div>
		<div class="select-tools">
			<button><svg viewBox="0 0 18 18"><path d="M1 3h6v4H1zM9 3h6v4H9z" stroke="#eb9a2c"/><path class="fw" d="M8 5l7 8h-4l1 4-2 1-1-4-2 2z"/></svg></button>
			<button><svg viewBox="0 0 18 18"><path d="M2 7l5-4v8l-5 4z" fill="#3a9be8"/><path class="fw" d="M8 5l6 8h-3l1 4-2 1-1-4-2 2z"/><path d="M11 1l5 5M16 1l-5 5" stroke="#e8412b" stroke-width="2"/></svg></button>
			<button><svg viewBox="0 0 18 18"><path d="M2 2h8M4 2v5h4V2M2 7h8M6 7v6"/><path class="fw" d="M8 6l7 8h-4l1 3-2 1-1-4-2 2z"/></svg></button>
			<button><svg viewBox="0 0 18 18"><path d="M2 5l3-3h5v10l-2 3H2z" fill="#3a9be8" stroke="#2b6fb0"/><path class="fw" d="M8 6l6 7h-3l1 4-2 1-1-4-2 2z"/><path d="M11 1l5 5M16 1l-5 5" stroke="#e8412b" stroke-width="2"/></svg></button>
			<button><svg viewBox="0 0 18 18"><path d="M7 1v12M1 7h12M5 3l2-2 2 2M3 5L1 7l2 2M11 5l2 2-2 2" /><path class="fw" d="M9 7l7 7h-4l1 3-2 1-1-4-1 2z"/></svg></button>
			<button class="faint"><svg viewBox="0 0 18 18"><circle cx="9" cy="9" r="6" stroke-width="3" stroke-dasharray="2 3"/></svg></button>
			<button class="filter"><svg viewBox="0 0 18 18"><path class="fl" d="M2 2h14l-5 7v8l-4-3V9z"/></svg>:0</button>
		</div>
		<span class="percent">120%</span>
	</footer>
	<script src="script.js"></script>
</body>
</html>
```
FILE: styles.css
```css
* {
	box-sizing: border-box;
	margin: 0;
	padding: 0;
}

body {
	height: 100vh;
	display: flex;
	flex-direction: column;
	overflow: hidden;
	background: #f3f3f3;
	color: #333;
	font: 11px/14px "Noto Sans", "Open Sans", sans-serif;
	--blue: #69b2e8;
	--cyan: #5cc8d6;
	--white: #fafafa;
	--gray: #c4c4c4;
	--light: #ececec;
}

button {
	background: none;
	border: 0;
	color: inherit;
	font: inherit;
	display: flex;
	align-items: center;
	justify-content: center;
}

a {
	color: inherit;
	text-decoration: none;
}

svg {
	width: 18px;
	height: 18px;
	flex: none;
	fill: none;
	stroke: currentColor;
}
svg text {
	fill: currentColor;
	stroke: none;
}
svg .fx { font: italic 28px "Liberation Serif", serif; }
svg .help {
	font-size: 12px;
	font-weight: 700;
	fill: #1c62b8;
}
svg .door { fill: #f2c14b; stroke: #b58a22; }
.sprite { display: none; }
.fb { fill: var(--blue); }
.fc { fill: var(--cyan); }
.fw { fill: var(--white); }
.fg { fill: var(--gray); }
.fl { fill: var(--light); }
.s8 { width: 8px; height: 8px; }
.s10 { width: 10px; height: 10px; }
.s18 { width: 18px; height: 18px; }
.off, .faint { color: #a3a3a3; }

/* title bar */
.titlebar {
	height: 28px;
	flex: none;
	display: flex;
	background: #dadada;
}
.quick, .account {
	display: flex;
	align-items: center;
	height: 24px;
	color: #4a4a4a;
}
.logo {
	width: 22px;
	height: 22px;
	border-radius: 2px;
	background: #1858c8;
	border-right: 2px solid #0c3b94;
	border-bottom: 2px solid #0c3b94;
	color: #fff;
	font-size: 14px;
	font-weight: 700;
}
.q { width: 23px; height: 22px; }
.q.off { color: #a3a3a3; }
.gap-r { margin-right: 4px; }
.c { width: 12px; height: 22px; }
.c svg { width: 8px; height: 8px; }
.c.menu { width: 18px; }
.c.menu svg { width: 10px; height: 10px; }
.sep {
	width: 1px;
	height: 20px;
	margin: 0 3px;
	background: #bdbdbd;
}
.big-a { font-size: 17px; font-weight: 600; }
.titlebar h1 {
	flex: 1;
	text-align: center;
	font-size: 11px;
	font-weight: 400;
	line-height: 19px;
	white-space: nowrap;
}
.account { font-size: 11px; }
.account .user { margin: 0 2px; }
.cart { margin: 0 2px; }
.winbtns {
	display: flex;
	align-items: center;
	height: 24px;
	margin-left: 51px;
}
.winbtns button { width: 25px; }
.winbtns svg { width: 14px; height: 14px; }

/* ribbon tabs */
.tabs {
	height: 21px;
	flex: none;
	display: flex;
	background: #dadada;
	border-bottom: 2px solid #84b135;
}
.tabs a {
	padding: 0 9px;
	line-height: 19px;
}
.tabs a:nth-child(n+8) { padding: 0 10px 0 9px; }
.tabs .file {
	width: 43px;
	margin-right: 3px;
	text-align: center;
	background: #2479b5;
	color: #fff;
}
.tabs a.current {
	padding: 0 8px;
	margin-left: 4px;
	background: #87b440;
	color: #222;
}
.collapse { margin-left: 21px; }
.collapse svg { width: 24px; height: 10px; }

/* ribbon */
.ribbon {
	height: 91px;
	flex: none;
	display: flex;
	background: #eaede2;
	border-bottom: 1px solid #d6d8d0;
}
.ribbon section {
	flex: none;
	display: flex;
	flex-direction: column;
	border-right: 2px solid #fafafa;
}
.tools {
	height: 72px;
	display: flex;
	justify-content: center;
	padding-top: 3px;
	background: #f4f4f4;
}
.tools button {
	flex-direction: column;
	justify-content: flex-start;
	position: relative;
	white-space: nowrap;
	color: #333;
}
.tools button svg {
	width: 32px;
	height: 32px;
	margin-bottom: 3px;
	color: #666;
}
.tools button:disabled, .tools button:disabled svg {
	color: #c6c6c6;
	--blue: #d4d4d4;
	--cyan: #cdcdcd;
	--white: #f4f4f4;
	--gray: #cbcbcb;
	--light: #e2e2e2;
}
.tools button .s8, .tools button:disabled .s8 {
	width: 8px;
	height: 8px;
	margin-top: 3px;
	color: #777;
}
.tools .drop .s8 {
	position: absolute;
	right: -7px;
	top: 43px;
}
.ribbon h2 {
	flex: 1;
	font-size: 11px;
	font-weight: 400;
	line-height: 16px;
	text-align: center;
}
.p-props { width: 64px; }
.p-params { width: 268px; }
.p-cols { width: 196px; }
.p-rows { width: 180px; }
.p-titles { width: 264px; }
.p-look { width: 297px; }
.p-elem { width: 59px; }
.p-split { width: 46px; }
.w36 { width: 36px; }
.w38 { width: 38px; }
.w46 { width: 46px; }
.w54 { width: 54px; }
.w58 { width: 58px; }
.w62 { width: 62px; }
.drop { margin-left: 9px; }
.p-look .tools { justify-content: flex-start; padding-left: 4px; }
.p-rows .tools, .p-titles .tools { padding-left: 2px; }
.selects {
	width: 96px;
	display: flex;
	flex-direction: column;
	gap: 3px;
}
.selects select {
	height: 20px;
	padding: 0 3px;
	border: 1px solid #e0e0e0;
	background: #fff conic-gradient(from 315deg at 50% 100%, #888 90deg, transparent 0) no-repeat right 2px center / 8px 4px;
	appearance: none;
	color: #333;
	font: inherit;
}
.options {
	height: 25px;
	flex: none;
	padding-left: 8px;
	background: #eaede2;
	line-height: 26px;
}

/* work area */
.work {
	flex: 1;
	min-height: 0;
	display: flex;
	border-top: 2px solid #bdbdbd;
}
.browser {
	width: 268px;
	flex: none;
	display: flex;
	flex-direction: column;
	background: #fff;
	border-right: 2px solid #bdbdbd;
}
.browser-title {
	height: 17px;
	flex: none;
	display: flex;
	justify-content: space-between;
	align-items: center;
	padding: 0 2px;
	background: #d8d8d8;
	white-space: nowrap;
}
.browser-title button { color: #666; }
.search {
	height: 24px;
	margin: 8px 9px;
	flex: none;
	display: flex;
	align-items: center;
	gap: 6px;
	padding-left: 7px;
	border: 1px solid #dedede;
	color: #666;
}
.search input {
	flex: 1;
	min-width: 0;
	border: 0;
	outline: 0;
	font: inherit;
}
.search input::placeholder { color: #999; }
.browser-body {
	flex: 1;
	min-height: 0;
	display: flex;
}

.tree {
	flex: 1;
	min-width: 0;
	display: flex;
	flex-direction: column;
	padding-left: 2px;
	list-style: none;
	color: #4a4a4a;
}
.tree li {
	flex: 1;
	min-height: 0;
	display: flex;
	align-items: center;
	white-space: nowrap;
}
.tree b { color: #222; }
.tree .ico { width: 16px; height: 16px; margin: 0 4px 0 0; color: #666; }
.tree .ico.head { margin-left: 4px; }
.tree .tog { width: 15px; align-self: stretch; }
.tree .tog svg { width: 9px; height: 9px; color: #555; }
.tree .tog + span { margin-left: 6px; }
/* guide cells: e empty, v line, t tee, l corner */
.g {
	position: relative;
	width: 15px;
	align-self: stretch;
	flex: none;
}
.g.long { width: 36px; }
.g::before, .g::after {
	content: "";
	position: absolute;
	left: 7px;
}
.g.v::before, .g.t::before, .g.l::before {
	top: 0;
	bottom: 0;
	border-left: 1px dashed #b5b5b5;
}
.g.l::before { bottom: 50%; }
.g.t::after, .g.l::after {
	top: 50%;
	right: 0;
	border-top: 1px dashed #b5b5b5;
}
.g.long::after { right: 4px; }

/* scroll bars */
.vbar {
	width: 17px;
	flex: none;
	display: flex;
	flex-direction: column;
	background: #ededed;
	color: #888;
}
.vbar button { height: 17px; }
.vbar .track, .hbar .track, .mini .track {
	flex: 1;
	position: relative;
}
.thumb { position: absolute; background: #cdcdcd; }
.browser .thumb {
	top: 27%;
	height: 28%;
	left: 6px;
	width: 5px;
	border-radius: 3px;
	background: #d2d2d6;
}
.vbar.wide { width: 18px; background: #f0f0f0; }
.wide .thumb {
	top: 48%;
	height: 15px;
	left: 6px;
	width: 5px;
}
.hbar {
	height: 16px;
	flex: none;
	display: flex;
	background: #f1f1f1;
	color: #444;
}
.hbar button { width: 16px; }
.hbar .thumb { left: 1px; top: 0; bottom: 0; }
.t238 .thumb { width: 238px; }
.t85 .thumb { width: 85px; }
.t53 .thumb { width: 53px; }

/* panes */
.views {
	flex: 1;
	min-width: 0;
	display: grid;
	grid-template-columns: 1fr 1fr;
	grid-template-rows: 51fr 50fr;
}
.pane {
	min-width: 0;
	min-height: 0;
	display: flex;
	flex-direction: column;
	padding-left: 3px;
	border-right: 2px solid #c4c4c4;
	background: #f6f6f6;
}
.pane:nth-child(even) { border-right: 0; padding-left: 4px; }
.pane.small { padding-bottom: 5px; }
.pane-tabs {
	height: 20px;
	flex: none;
	display: flex;
	justify-content: space-between;
	margin-left: -3px;
	background: #cbcbcb;
}
.tab {
	display: flex;
	align-items: center;
	gap: 8px;
	padding-left: 6px;
	background: #dadada;
	color: #444;
	white-space: nowrap;
}
.tab > svg { width: 14px; height: 14px; color: #777; }
.tab-3d { width: 124px; }
.tab-300 { width: 208px; }
.tab-400 { width: 193px; }
.tab-500 { width: 204px; background: #fff; font-weight: 600; }
.tab-500 button { margin-left: auto; padding-right: 4px; color: #666; }
.list { width: 17px; color: #666; }

.heading {
	height: 46px;
	flex: none;
	margin-bottom: 2px;
	border: 2px solid #333;
	border-left-width: 1px;
	border-right: 0;
	background: #fff;
}
.small .heading { height: 42px; margin-top: 1px; }
.sheet {
	flex: 1;
	min-height: 0;
	overflow: hidden;
	background: #cfcfcf;
}
.schedule {
	width: 0;
	table-layout: fixed;
	border-spacing: 0;
	border-left: 1px solid #222;
	border-bottom: 2px solid #333;
	background: #fff;
	color: #222;
}
.schedule th, .schedule td {
	height: 18px;
	padding: 0 2px;
	border-right: 1px dotted #555;
	border-bottom: 1px dotted #555;
	overflow: hidden;
	white-space: nowrap;
	font-weight: 400;
	text-align: left;
}
.schedule th {
	height: 17px;
	text-align: center;
	vertical-align: bottom;
}
.schedule .letters th {
	height: 18px;
	border-right: 1px solid #222;
	border-bottom: 2px solid #000;
	background: #f1f1f1;
	font-size: 13px;
	font-weight: 700;
	line-height: 16px;
}
.schedule tbody tr:nth-child(5n+2) td, .schedule tbody tr:nth-child(5n+4) td { height: 19px; }
.small td, .small th { font-size: 10px; }
.schedule .clip { padding: 0; }
.small .schedule td, .small .schedule tbody tr:nth-child(n) td { height: 17px; }
.small .schedule tbody tr:nth-child(3n) td { height: 18px; }
.small .schedule td:first-child { text-align: center; }
.c254 { width: 254px; }
.c220 { width: 220px; }
.c198 { width: 198px; }
.c112 { width: 112px; }
.c102 { width: 102px; }
.c101 { width: 101px; }

/* 3D view */
.view3d .pane-tabs .door { fill: #efd9a0; }
.scene {
	flex: 1;
	min-height: 0;
	display: flex;
	margin-left: -1px;
	background: #fff;
}
.canvas {
	flex: 1;
	position: relative;
	overflow: hidden;
}
.model {
	position: absolute;
	left: 230px;
	top: 43px;
	width: 300px;
	height: 320px;
}
.cube {
	position: absolute;
	right: 10px;
	top: 23px;
	width: 70px;
	height: 60px;
	color: #888;
}
.navbar {
	position: absolute;
	right: 0;
	top: 90px;
	width: 34px;
	height: 113px;
	display: flex;
	flex-direction: column;
	align-items: center;
	padding: 1px;
	border: 2px solid #c2c2c2;
	border-radius: 5px;
	background: #f4f4f4;
	color: #888;
}
.navbar button:first-child, .navbar .last { align-self: flex-end; }
.navbar .last { margin-top: auto; }
.navbar .wheel { margin: 6px 0 4px; }
.wheel svg { width: 24px; height: 24px; }
.navbar .zoomer { margin: 5px 0 6px; }
.navbar hr {
	width: 26px;
	margin-top: 2px;
	border: 0;
	border-top: 1px solid #ccc;
}
.viewctl {
	height: 21px;
	flex: none;
	display: flex;
	align-items: center;
	color: #555;
}
.scale { width: 75px; padding-left: 4px; color: #333; }
.vc { width: 25px; }
.vc svg { width: 16px; height: 16px; }
.mini {
	flex: 1;
	align-self: stretch;
	display: flex;
	margin-left: 2px;
	background: #ededed;
	color: #888;
}
.mini button { width: 16px; background: #f4f4f4; }
.mini .thumb {
	left: 48%;
	width: 18px;
	top: 8px;
	height: 5px;
}
.grip { width: 10px; height: 10px; margin: 0 3px 0 5px; }

/* status bar */
.status {
	height: 26px;
	flex: none;
	display: flex;
	align-items: center;
	padding: 3px 10px 0 1px;
}
.status p {
	width: 828px;
	font: 12px/14px Roboto, sans-serif;
}
.status button svg { width: 16px; height: 16px; }
.globe { margin-right: 194px; }
.model-state { display: flex; align-items: center; gap: 9px; }
.model-state .ic { display: flex; align-items: center; margin-right: 14px; }
.main-model { gap: 124px; }
.status .main-model svg { width: 8px; height: 8px; }
.select-tools { display: flex; margin-left: auto; }
.select-tools button { width: 25px; }
.select-tools .filter { width: 34px; }
.percent { width: 91px; text-align: right; }
```
FILE: script.js
```js
// fill the schedules, every unit has the same values
document.querySelectorAll('tbody[data-row]').forEach(body => {
	const cells = body.dataset.row.split('|').map(c => `<td>${c}</td>`).join('')
	body.innerHTML = `<tr>${cells}</tr>`.repeat(14)
})

// project browser rows: guides, toggle or icon, label
// guides: e empty, v line, t tee, l corner, capital letter = long branch to an icon
const rows = [
	['l', '-', 'Elevations (Building Elevation)'],
	['eT', 'view', 'East'],
	['eT', 'view', 'North'],
	['eT', 'view', 'South'],
	['eL', 'view', 'West'],
	['e', 'legend', 'Legends'],
	['', '-sched', 'Schedules/Quantities (01 ALL)'],
	['t', '+', 'Arch'],
	['t', '+', 'Cons'],
	['t', '+', 'Coor'],
	['t', '+', 'Elec'],
	['t', '-', 'FM'],
	['vl', '-', '500-OPERATIONS'],
	['veT', 'view', 'AIR HANDLING UNIT LODi 300'],
	['veT', 'view', 'Air Handling Units LODi 400'],
	['veT', 'view', '<b>Air Handling Units LODi 500</b>'],
	['veT', 'view', 'Doors LODi 500'],
	['veT', 'view', 'Lighting Fixture LODi 500'],
	['veT', 'view', 'Plumbing Fixtures LODi 500'],
	['veL', 'view', 'Room Data LODi 500'],
	['l', '+', 'Mech'],
	['e', 'sheet', 'Sheets (all)'],
	['', '-family', 'Families'],
	['t', '+', 'Analytical Links'],
	['t', '+', 'Annotation Symbols'],
	['t', '+', 'Cable Trays'],
	['t', '+', 'Casework'],
	['t', '+', 'Ceilings'],
	['t', '+', 'Columns'],
	['t', '+', 'Conduits'],
	['t', '+', 'Curtain Panels'],
	['t', '+', 'Curtain Systems'],
	['t', '-', 'Curtain Wall Mullions'],
	['vt', '+', 'Circular Mullion'],
	['vt', '+', 'L Corner Mullion'],
	['vt', '+', 'Quad Corner Mullion'],
	['vt', '-', 'Rectangular Mullion'],
	['vvT', '', '30mm Square'],
	['vvT', '', '40mm x 65mm']
]

const toggle = c => `<button class="tog"><svg><use href="#${c === '+' ? 'plus' : 'minus'}"/></svg></button>`
const icon = (name, head) => `<svg class="ico${head ? ' head' : ''}"><use href="#t-${name}"/></svg>`

document.getElementById('tree').innerHTML = rows.map(([guides, kind, label]) => {
	let html = [...guides].map(g => `<i class="g ${g.toLowerCase()}${g < 'a' ? ' long' : ''}"></i>`).join('')
	if (kind[0] === '+' || kind[0] === '-') {
		html += toggle(kind[0])
		kind = kind.slice(1)
		if (kind) html += icon(kind, true)
	} else if (kind) {
		html += icon(kind, kind !== 'view')
	}
	return `<li>${html}<span>${label}</span></li>`
}).join('')
```
